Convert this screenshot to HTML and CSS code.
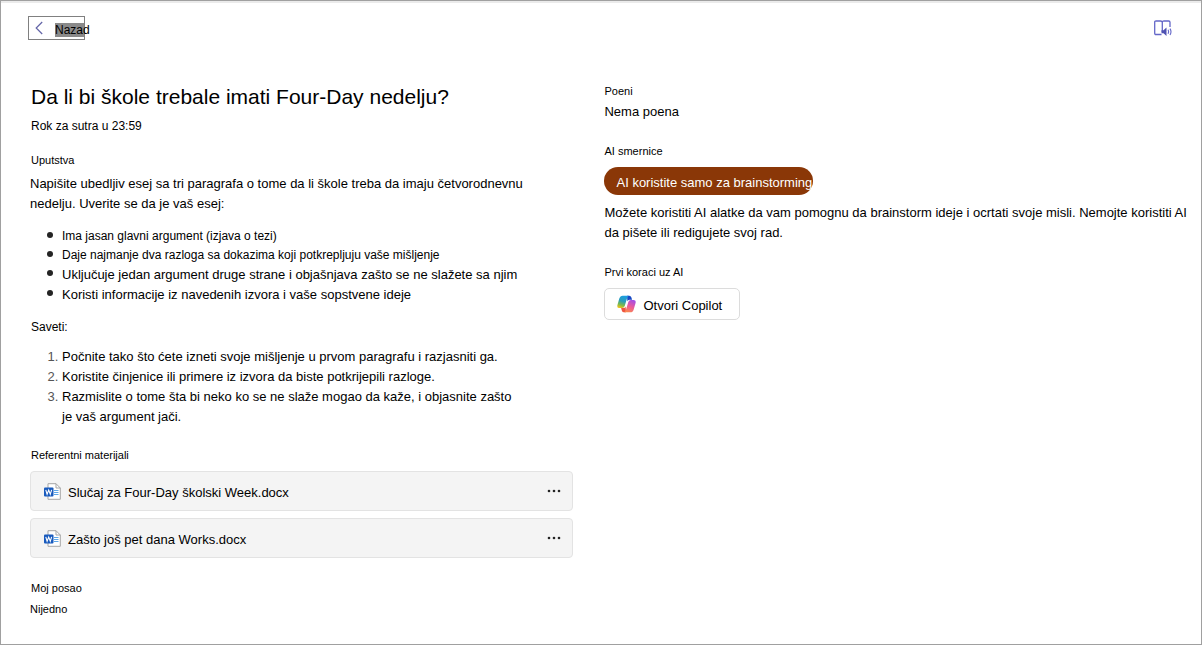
FILE: index.html
```html
<!DOCTYPE html>
<html lang="sr-Latn">
<head>
  <meta charset="UTF-8">
  <meta name="viewport" content="width=device-width, initial-scale=1">
  <title>Da li bi škole trebale imati Four-Day nedelju?</title>
  <link rel="stylesheet" href="styles.css">
</head>
<body>

  <header class="topbar">
    <button type="button" class="back">
      <svg width="8" height="14" viewBox="0 0 8 14" fill="none" stroke="#6264a7" stroke-width="1.2"><path d="M7.2 1L1.2 7l6 6"/></svg>
      <span class="back-text">Nazad</span>
    </button>
    <button type="button" class="reader" aria-label="Glasovni čitač">
      <svg width="18" height="17" viewBox="0 0 18 17" fill="none" stroke="#6467c8" stroke-width="1.3">
        <path d="M7.5 14.5H2Q.7 14.5.7 13.200V2.200Q.7 1 2 1h4.500Q8.300 1 8.300 2.600V12M8.300 2.600Q8.300 1 10 1h4.700Q16 1 16 2.200V7"/>
        <path d="M7.500 10.200h2L12.500 7.500v8.400l-3-2.600h-2z" fill="#4f52b2" stroke="none"/>
        <path d="M14 9.800q1.200 2 0 4M16 8.600q2 3.200 0 6.400" stroke-width="1.100"/>
      </svg>
    </button>
  </header>

  <main class="content">
    <section class="left">
      <h1>Da li bi škole trebale imati Four-Day nedelju?</h1>
      <p class="due">Rok za sutra u 23:59</p>

      <h2>Uputstva</h2>
      <div class="instructions">
        <p>Napišite ubedljiv esej sa tri paragrafa o tome da li škole treba da imaju četvorodnevnu nedelju. Uverite se da je vaš esej:</p>
        <ul>
          <li class="small">Ima jasan glavni argument (izjava o tezi)</li>
          <li class="small">Daje najmanje dva razloga sa dokazima koji potkrepljuju vaše mišljenje</li>
          <li>Uključuje jedan argument druge strane i objašnjava zašto se ne slažete sa njim</li>
          <li>Koristi informacije iz navedenih izvora i vaše sopstvene ideje</li>
        </ul>
        <p class="tips">Saveti:</p>
        <ol>
          <li>Počnite tako što ćete izneti svoje mišljenje u prvom paragrafu i razjasniti ga.</li>
          <li>Koristite činjenice ili primere iz izvora da biste potkrijepili razloge.</li>
          <li>Razmislite o tome šta bi neko ko se ne slaže mogao da kaže, i objasnite zašto je&nbsp;vaš argument jači.</li>
        </ol>
      </div>

      <h2 class="files-title">Referentni materijali</h2>
      <div class="files">
        <div class="file">
          <svg class="word" width="17" height="17" viewBox="0 0 17 17">
            <path d="M4 .7h8L16.300 5v11.300H4z" fill="#fff" stroke="#a5a5a5"/>
            <path d="M12 .7V5h4.300" fill="none" stroke="#a5a5a5"/>
            <path d="M10 7.500h4.500M10 9.500h4.500M10 11.500h4.500" stroke="#5ea7e8" stroke-width="1.200"/>
            <rect x="0" y="4.500" width="9.500" height="9" rx="1" fill="#185abd"/>
            <path d="M1.800 6.800l1.300 4.500 1.600-4.300 1.600 4.300 1.300-4.500" fill="none" stroke="#fff" stroke-width="1.100"/>
          </svg>
          <a href="#">Slučaj za Four-Day školski Week.docx</a>
          <button type="button" class="more" aria-label="Više opcija">
            <svg width="14" height="4" viewBox="0 0 14 4" fill="#242424"><circle cx="2" cy="2" r="1.300"/><circle cx="7" cy="2" r="1.300"/><circle cx="12" cy="2" r="1.300"/></svg>
          </button>
        </div>
        <div class="file">
          <svg class="word" width="17" height="17" viewBox="0 0 17 17">
            <path d="M4 .7h8L16.300 5v11.300H4z" fill="#fff" stroke="#a5a5a5"/>
            <path d="M12 .7V5h4.300" fill="none" stroke="#a5a5a5"/>
            <path d="M10 7.500h4.500M10 9.500h4.500M10 11.500h4.500" stroke="#5ea7e8" stroke-width="1.200"/>
            <rect x="0" y="4.500" width="9.500" height="9" rx="1" fill="#185abd"/>
            <path d="M1.800 6.800l1.300 4.500 1.600-4.300 1.600 4.300 1.300-4.500" fill="none" stroke="#fff" stroke-width="1.100"/>
          </svg>
          <a href="#">Zašto još pet dana Works.docx</a>
          <button type="button" class="more" aria-label="Više opcija">
            <svg width="14" height="4" viewBox="0 0 14 4" fill="#242424"><circle cx="2" cy="2" r="1.300"/><circle cx="7" cy="2" r="1.300"/><circle cx="12" cy="2" r="1.300"/></svg>
          </button>
        </div>
      </div>

      <h2 class="work-title">Moj posao</h2>
      <p class="work">Nijedno</p>
    </section>

    <section class="right">
      <h2>Poeni</h2>
      <p class="points">Nema poena</p>

      <h2>AI smernice</h2>
      <span class="badge">AI koristite samo za brainstorming</span>
      <p class="guideline">Možete koristiti AI alatke da vam pomognu da brainstorm ideje i ocrtati svoje misli. Nemojte koristiti AI<br>da pišete ili redigujete svoj rad.</p>

      <h2>Prvi koraci uz AI</h2>
      <button type="button" class="copilot">
        <svg width="19" height="18" viewBox="0 0 19 18">
          <defs>
            <linearGradient id="cool" x1="0.600" y1="0" x2="0.300" y2="1">
              <stop offset="0" stop-color="#1b9de2"/>
              <stop offset="0.450" stop-color="#2b9fb8"/>
              <stop offset="0.750" stop-color="#7cba4c"/>
              <stop offset="1" stop-color="#efc21a"/>
            </linearGradient>
            <linearGradient id="warm" x1="0.700" y1="0" x2="0.300" y2="1">
              <stop offset="0" stop-color="#a34ee8"/>
              <stop offset="0.500" stop-color="#ea5a9b"/>
              <stop offset="1" stop-color="#fb8a4c"/>
            </linearGradient>
          </defs>
          <path d="M10 .7h2.300q1.500 0 2 1.500l.8 2.600h-2.600q-1.600 0-2.100 1.500z" fill="#1748c4"/>
          <path d="M9 17.300H6.800q-1.400 0-1.900-1.500l-.8-2.700h2.400q1.600 0 2.100-1.500z" fill="#ee5540"/>
          <path d="M5.700.7h6.200q-1.200.3-1.700 2L7.700 11q-.7 2.100-2.600 2.100H2.400Q-.4 13.100.5 9.800L2.300 3.600Q3.100.7 5.700.7z" fill="url(#cool)"/>
          <path d="M13.300 17.300H7.100q1.200-.3 1.700-2L11.300 7q.7-2.100 2.600-2.100h2.700q2.800 0 1.900 3.300l-1.800 6.200q-.8 2.900-3.400 2.900z" fill="url(#warm)"/>
        </svg>
        <span>Otvori Copilot</span>
      </button>
    </section>
  </main>

</body>
</html>
```
FILE: styles.css
```css
* {
  box-sizing: border-box;
}
body {
  margin: 0;
  min-height: 100vh;
  border: 1px solid #a0a0a0;
  background-color: #fff;
  color: #000;
  font-family: "Liberation Sans", Arial, sans-serif;
  font-size: 13px;
  line-height: 20px;
}
h1, h2, p, ul, ol {
  margin: 0;
}
h1 {
  font-size: 21px;
  font-weight: normal;
  line-height: 28px;
}
h2 {
  font-size: 11px;
  font-weight: normal;
  line-height: 16px;
}
button {
  font: inherit;
  color: inherit;
  cursor: pointer;
}
a {
  color: inherit;
  text-decoration: none;
}

/* top bar */
.topbar {
  display: flex;
  justify-content: space-between;
  align-items: center;
  padding: 13px 29px 0 27px;
  border-top: 2px solid #ebebeb;
}
.back {
  display: flex;
  align-items: center;
  gap: 12px;
  width: 57px;
  height: 24px;
  padding: 0 0 0 6px;
  border: 1px solid #808080;
  background: none;
}
.back svg {
  flex: none;
}
.back-text {
  margin-top: 3px;
  font-size: 12px;
  line-height: 14px;
  background: linear-gradient(#8a8a8a, #8a8a8a) no-repeat 0 0 / 29px 100%;
}
.reader {
  display: flex;
  padding: 0;
  border: 0;
  background: none;
}

/* columns */
.content {
  display: grid;
  grid-template-columns: minmax(0, 543fr) minmax(0, 568fr);
  gap: 31px;
  padding: 43px 28px 20px 29px;
}
.due {
  margin: 5px 1px 16px;
  font-size: 12px;
}
.left h1,
.left h2 {
  margin-left: 1px;
}
.instructions {
  max-width: 500px;
  padding-top: 6px;
}
.instructions ul,
.instructions ol {
  padding-left: 32px;
}
.instructions ul {
  margin: 13px 0 12px;
  list-style: none;
}
.instructions ul li::before {
  content: "";
  float: left;
  width: 6px;
  height: 6px;
  margin: 5px 0 0 -15px;
  border-radius: 50%;
  background-color: #242424;
}
.instructions .small {
  font-size: 12px;
  line-height: 19px;
}
.instructions .tips {
  margin-left: 1px;
  font-size: 12px;
}
.instructions ol {
  margin-top: 10px;
}
.instructions li::marker {
  color: #555;
}
.files-title {
  margin-top: 20px;
}
.files {
  display: flex;
  flex-direction: column;
  gap: 7px;
  margin-top: 8px;
}
.file {
  display: flex;
  align-items: center;
  height: 40px;
  padding: 0 11px 0 13px;
  border: 1px solid #e3e3e3;
  border-radius: 4px;
  background-color: #f4f4f4;
}
.file a {
  flex: 1;
  margin: 4px 0 0 7px;
}
.more {
  display: flex;
  padding: 0;
  border: 0;
  background: none;
}
.work-title {
  margin-top: 22px;
}
.work {
  margin-top: 3px;
  font-size: 11px;
}

.points {
  margin: 3px 0 21px;
}
.badge {
  display: inline-block;
  margin-top: 8px;
  padding: 6px 1px 2px 12px;
  border-radius: 14px;
  background-color: #8a3707;
  color: #fff;
}
.guideline {
  margin: 8px 0 21px;
}
@media (min-width: 1200px) {
  .guideline {
    white-space: nowrap;
  }
}
.copilot {
  display: flex;
  align-items: center;
  gap: 7px;
  height: 32px;
  margin-top: 8px;
  padding: 0 17px 0 12px;
  border: 1px solid #dcdcdc;
  border-radius: 5px;
  background-color: #fff;
}
.copilot span {
  padding-top: 4px;
}
```
